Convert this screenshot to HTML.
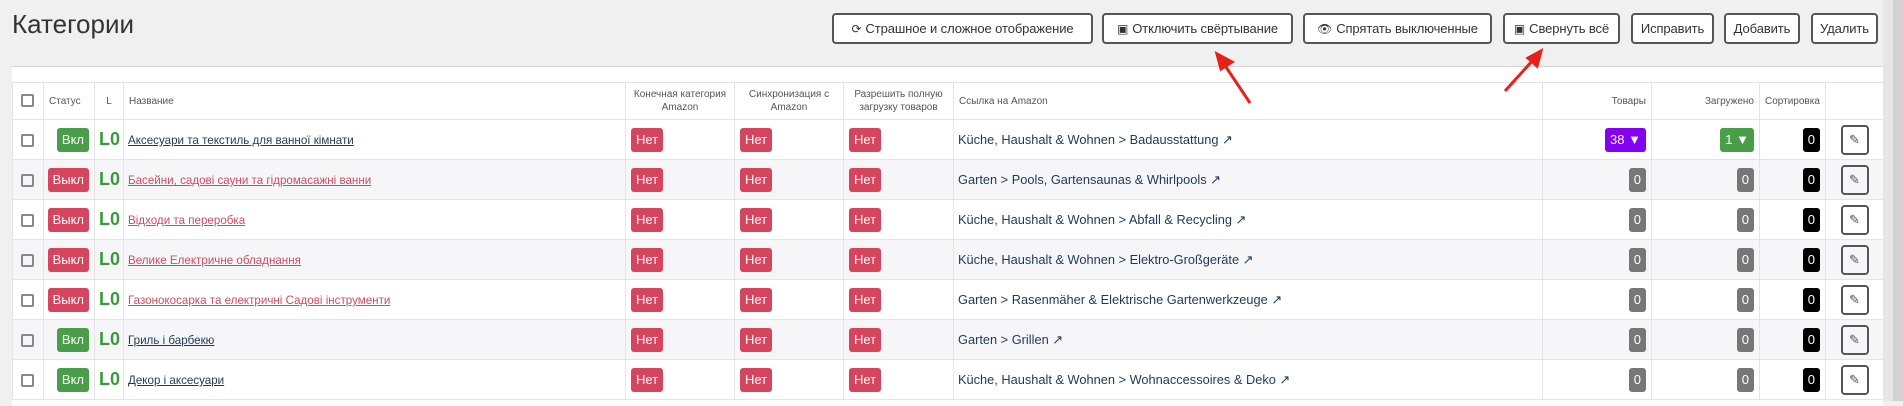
<!DOCTYPE html>
<html><head><meta charset="utf-8"><style>
*{box-sizing:border-box;margin:0;padding:0}
body{width:1903px;height:401px;overflow:hidden;background:#f0f0f0;font-family:"Liberation Sans",sans-serif;position:relative}
.sb{position:absolute;left:1883px;top:0;width:20px;height:401px;background:#e6e6e6}
.sb2{position:absolute;left:1893px;top:0;width:10px;height:401px;background:#d2d2d2}
h1{position:absolute;left:12px;top:9px;font-weight:normal;font-size:26px;color:#333}
.btn{position:absolute;top:13px;height:31px;border:2px solid #555;border-radius:4px;background:#fff;font-size:13px;color:#333;display:flex;align-items:center;justify-content:center;white-space:nowrap;letter-spacing:-0.1px}
.ic{display:inline-block;margin-right:4px;font-size:12px}
.panel{position:absolute;left:12px;top:66px;width:1871px;height:340px;background:#fff;border-top:1px solid #d4d4d4}
table{position:absolute;left:12px;top:82px;border-collapse:collapse;table-layout:fixed;width:1871px}
td,th{border:1px solid #e4e4e4;font-size:13px;vertical-align:middle}
th{height:37px;font-weight:normal;font-size:10px;color:#555;text-align:left;padding:0 5px;line-height:13px}
tr.r td{height:40px}
tr.g td{background:#f6f6f8}
.cb{width:13px;height:13px;border:2px solid #888;border-radius:2px;display:inline-block;margin-left:8px;vertical-align:middle}
.b{display:inline-block;height:24px;line-height:24px;padding:0 5px;border-radius:3px;color:#fff;font-size:13px}
.on{background:#4a9e4a}.off{background:#d5465e}.pu{background:#8400f0}.gr{background:#777}.bk{background:#000}
.L{color:#3a9a3a;font-weight:bold;font-size:18px;padding-left:4px}
a{color:#1d3a57;text-decoration:underline;padding-left:4px;font-size:11.6px}
a.d{color:#c94f60}
.lk{color:#1d3a57;padding-left:4px;font-size:12.8px}
.ed{display:inline-block;width:28px;height:30px;border:2px solid #555;border-radius:4px;vertical-align:middle;text-align:center;line-height:26px;font-size:13px;color:#555}
.rt{text-align:right;padding-right:5px}
</style></head><body>
<div class="sb"></div><div class="sb2"></div>
<h1>Категории</h1>
<div class="btn" style="left:832px;width:261px"><span class="ic">⟳</span>Страшное и сложное отображение</div>
<div class="btn" style="left:1102px;width:191px"><span class="ic">▣</span>Отключить свёртывание</div>
<div class="btn" style="left:1303px;width:189px"><span class="ic">👁</span>Спрятать выключенные</div>
<div class="btn" style="left:1503px;width:117px"><span class="ic">▣</span>Свернуть всё</div>
<div class="btn" style="left:1631px;width:83px">Исправить</div>
<div class="btn" style="left:1724px;width:76px">Добавить</div>
<div class="btn" style="left:1811px;width:67px">Удалить</div>
<div class="panel"></div>
<table>
<colgroup><col style="width:31px"><col style="width:51px"><col style="width:29px"><col style="width:502px"><col style="width:109px"><col style="width:109px"><col style="width:110px"><col style="width:589px"><col style="width:109px"><col style="width:108px"><col style="width:66px"><col style="width:58px"></colgroup>
<tr><th><span class="cb" style="margin-left:3px"></span></th><th>Статус</th><th style="text-align:center">L</th><th>Название</th><th style="text-align:center">Конечная категория Amazon</th><th style="text-align:center">Синхронизация с Amazon</th><th style="text-align:center">Разрешить полную загрузку товаров</th><th>Ссылка на Amazon</th><th class="rt">Товары</th><th class="rt">Загружено</th><th>Сортировка</th><th></th></tr>
<tr class="r"><td><span class="cb"></span></td><td class="rt"><span class="b on">Вкл</span></td><td><span class="L">L0</span></td><td><a>Аксесуари та текстиль для ванної кімнати</a></td><td style="padding-left:5px"><span class="b off">Нет</span></td><td style="padding-left:5px"><span class="b off">Нет</span></td><td style="padding-left:5px"><span class="b off">Нет</span></td><td><span class="lk">Küche, Haushalt &amp; Wohnen &gt; Badausstattung ↗</span></td><td class="rt"><span class="b pu">38 ▼</span></td><td class="rt"><span class="b on">1 ▼</span></td><td class="rt"><span class="b bk">0</span></td><td style="text-align:center"><span class="ed">✎</span></td></tr>
<tr class="r g"><td><span class="cb"></span></td><td class="rt"><span class="b off">Выкл</span></td><td><span class="L">L0</span></td><td><a class="d">Басейни, садові сауни та гідромасажні ванни</a></td><td style="padding-left:5px"><span class="b off">Нет</span></td><td style="padding-left:5px"><span class="b off">Нет</span></td><td style="padding-left:5px"><span class="b off">Нет</span></td><td><span class="lk">Garten &gt; Pools, Gartensaunas &amp; Whirlpools ↗</span></td><td class="rt"><span class="b gr">0</span></td><td class="rt"><span class="b gr">0</span></td><td class="rt"><span class="b bk">0</span></td><td style="text-align:center"><span class="ed">✎</span></td></tr>
<tr class="r"><td><span class="cb"></span></td><td class="rt"><span class="b off">Выкл</span></td><td><span class="L">L0</span></td><td><a class="d">Відходи та переробка</a></td><td style="padding-left:5px"><span class="b off">Нет</span></td><td style="padding-left:5px"><span class="b off">Нет</span></td><td style="padding-left:5px"><span class="b off">Нет</span></td><td><span class="lk">Küche, Haushalt &amp; Wohnen &gt; Abfall &amp; Recycling ↗</span></td><td class="rt"><span class="b gr">0</span></td><td class="rt"><span class="b gr">0</span></td><td class="rt"><span class="b bk">0</span></td><td style="text-align:center"><span class="ed">✎</span></td></tr>
<tr class="r g"><td><span class="cb"></span></td><td class="rt"><span class="b off">Выкл</span></td><td><span class="L">L0</span></td><td><a class="d">Велике Електричне обладнання</a></td><td style="padding-left:5px"><span class="b off">Нет</span></td><td style="padding-left:5px"><span class="b off">Нет</span></td><td style="padding-left:5px"><span class="b off">Нет</span></td><td><span class="lk">Küche, Haushalt &amp; Wohnen &gt; Elektro-Großgeräte ↗</span></td><td class="rt"><span class="b gr">0</span></td><td class="rt"><span class="b gr">0</span></td><td class="rt"><span class="b bk">0</span></td><td style="text-align:center"><span class="ed">✎</span></td></tr>
<tr class="r"><td><span class="cb"></span></td><td class="rt"><span class="b off">Выкл</span></td><td><span class="L">L0</span></td><td><a class="d">Газонокосарка та електричні Садові інструменти</a></td><td style="padding-left:5px"><span class="b off">Нет</span></td><td style="padding-left:5px"><span class="b off">Нет</span></td><td style="padding-left:5px"><span class="b off">Нет</span></td><td><span class="lk">Garten &gt; Rasenmäher &amp; Elektrische Gartenwerkzeuge ↗</span></td><td class="rt"><span class="b gr">0</span></td><td class="rt"><span class="b gr">0</span></td><td class="rt"><span class="b bk">0</span></td><td style="text-align:center"><span class="ed">✎</span></td></tr>
<tr class="r g"><td><span class="cb"></span></td><td class="rt"><span class="b on">Вкл</span></td><td><span class="L">L0</span></td><td><a>Гриль і барбекю</a></td><td style="padding-left:5px"><span class="b off">Нет</span></td><td style="padding-left:5px"><span class="b off">Нет</span></td><td style="padding-left:5px"><span class="b off">Нет</span></td><td><span class="lk">Garten &gt; Grillen ↗</span></td><td class="rt"><span class="b gr">0</span></td><td class="rt"><span class="b gr">0</span></td><td class="rt"><span class="b bk">0</span></td><td style="text-align:center"><span class="ed">✎</span></td></tr>
<tr class="r"><td><span class="cb"></span></td><td class="rt"><span class="b on">Вкл</span></td><td><span class="L">L0</span></td><td><a>Декор і аксесуари</a></td><td style="padding-left:5px"><span class="b off">Нет</span></td><td style="padding-left:5px"><span class="b off">Нет</span></td><td style="padding-left:5px"><span class="b off">Нет</span></td><td><span class="lk">Küche, Haushalt &amp; Wohnen &gt; Wohnaccessoires &amp; Deko ↗</span></td><td class="rt"><span class="b gr">0</span></td><td class="rt"><span class="b gr">0</span></td><td class="rt"><span class="b bk">0</span></td><td style="text-align:center"><span class="ed">✎</span></td></tr>
</table>
<svg style="position:absolute;left:0;top:0" width="1903" height="401">
<g stroke="#e8201a" stroke-width="3" fill="#e8201a">
<line x1="1250" y1="103" x2="1224" y2="64"/><polygon points="1217,54 1232,62 1221,69"/>
<line x1="1505" y1="91" x2="1534" y2="59"/><polygon points="1541,51 1537,66 1528,58"/>
</g></svg>
</body></html>
